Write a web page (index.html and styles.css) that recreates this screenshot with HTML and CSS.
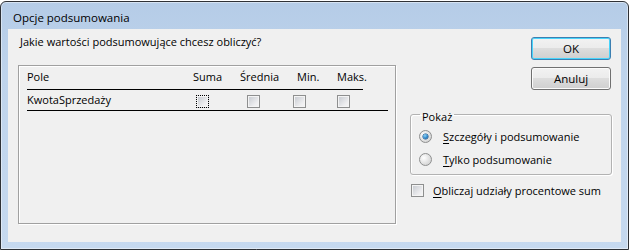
FILE: index.html
```html
<!DOCTYPE html>
<html lang="pl">
<head>
<meta charset="utf-8">
<title>Opcje podsumowania</title>
<link rel="stylesheet" href="styles.css">
</head>
<body>
<div class="window">
  <div class="titlebar">Opcje podsumowania</div>
  <div class="client">
    <div class="left">
      <div class="prompt">Jakie wartości podsumowujące chcesz obliczyć?</div>
      <div class="panel">
        <div class="hrow">
          <span>Pole</span><span>Suma</span><span>Średnia</span><span>Min.</span><span>Maks.</span>
        </div>
        <div class="drow">
          <span>KwotaSprzedaży</span>
          <span class="cb focus"></span>
          <span class="cb"></span>
          <span class="cb"></span>
          <span class="cb"></span>
        </div>
      </div>
    </div>
    <div class="right">
      <div class="buttons">
        <button class="btn default">OK</button>
        <button class="btn">Anuluj</button>
      </div>
      <fieldset class="group">
        <legend>Pokaż</legend>
        <div class="opt"><span class="radio on"></span><span><u>S</u>zczegóły i podsumowanie</span></div>
        <div class="opt"><span class="radio"></span><span><u>T</u>ylko podsumowanie</span></div>
      </fieldset>
      <div class="check"><span class="cb"></span><span><u>O</u>bliczaj udziały procentowe sum</span></div>
    </div>
  </div>
</div>
</body>
</html>
```

FILE: styles.css
```css
* { box-sizing: border-box; }
body {
  margin: 0;
  background: #fff;
  font-family: "Open Sans", "Noto Sans", sans-serif;
  font-size: 11px;
  line-height: 16px;
  color: #000;
  white-space: nowrap;
}
.window {
  margin-top: 1px;
  width: 629px;
  height: 249px;
  border: 1px solid #2e3136;
  border-radius: 6px 6px 0 0;
  background: linear-gradient(#b5cce7, #bfd4ec 30%, #c6d9ef);
  box-shadow: inset 0 0 0 1px rgba(255,255,255,0.45);
  padding: 0 7px 7px;
  display: flex;
  flex-direction: column;
}
.titlebar {
  height: 27px;
  padding: 8px 0 0 5px;
  font-size: 11.5px;
}
.client {
  flex: 1;
  background: #f0f0f0;
  display: flex;
}
.left {
  padding: 5px 0 0 10px;
  width: 388px;
}
.prompt { padding-left: 2px; }
.panel {
  margin-top: 15px;
  width: 378px;
  height: 159px;
  border: 1px solid #a0a0a0;
  box-shadow: 1px 1px 0 #fff, inset 1px 1px 0 #fff;
  padding: 3px 6px 0 8px;
}
.hrow {
  display: grid;
  grid-template-columns: 166px 47px 57px 40px auto;
  width: 336px;
  padding-bottom: 4px;
  border-bottom: 1px solid #000;
}
.drow {
  display: grid;
  grid-template-columns: 169px 51px 46px 44px auto;
  align-items: center;
  width: 361px;
  padding: 2px 0;
  border-bottom: 1px solid #000;
}
.cb {
  display: block;
  width: 13px;
  height: 13px;
  border: 1px solid #8e8f8f;
  background: linear-gradient(135deg, #c4c8ce, #eeeef0 70%, #f6f6f6);
  box-shadow: inset 0 0 0 1px #f4f4f4;
}
.drow .cb { margin-top: 2px; }
.cb.focus { border: 1px dotted #000; }
.right {
  margin-left: 14px;
  width: 202px;
  padding-top: 8px;
  display: flex;
  flex-direction: column;
}
.buttons {
  display: flex;
  flex-direction: column;
  align-items: flex-end;
  gap: 7px;
  padding-right: 1px;
}
.btn {
  width: 80px;
  height: 23px;
  font: inherit;
  font-size: 11.5px;
  color: #000;
  border: 1px solid #707070;
  border-radius: 3px;
  background: linear-gradient(#f2f2f2, #ebebeb 50%, #dddddd 50%, #cfcfcf);
  box-shadow: inset 0 0 0 1px #fbfbfb;
  padding: 0;
}
.btn.default {
  border-color: #3c7fb1;
  box-shadow: inset 0 0 0 1px #48d4fb;
}
.group {
  margin: 13px 0 0;
  width: 202px;
  border: 1px solid #b2b2b2;
  border-radius: 3px;
  box-shadow: inset 1px 1px 0 #fff, 1px 1px 0 #fff;
  padding: 0 0 3px 8px;
}
.group legend {
  padding: 6px 2px 0;
  margin-left: 1px;
}
.opt {
  height: 23px;
  display: flex;
  align-items: center;
  gap: 11px;
}
.radio {
  width: 13px;
  height: 13px;
  border-radius: 50%;
  border: 1px solid #8e8f8f;
  background: radial-gradient(circle at 35% 35%, #ffffff, #e6e6e6 45%, #c9c9c9);
  display: flex;
  align-items: center;
  justify-content: center;
}
.radio.on::after {
  content: "";
  width: 5px;
  height: 5px;
  border-radius: 50%;
  background: radial-gradient(circle at 40% 35%, #8fd3f5, #2a83c8 55%, #1a4f86);
  box-shadow: 0 0 0 0.5px #1c5185;
}
.check {
  margin-top: 4px;
  height: 23px;
  display: flex;
  align-items: center;
  gap: 9px;
  padding-left: 1px;
}
u { text-decoration-thickness: 1px; text-underline-offset: 2px; }
```
